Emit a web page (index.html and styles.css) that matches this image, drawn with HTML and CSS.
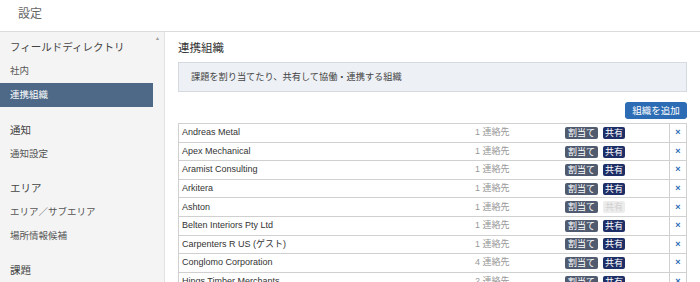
FILE: index.html
```html
<!DOCTYPE html>
<html lang="ja">
<head>
    <meta charset="UTF-8">
    <meta name="viewport" content="width=device-width, initial-scale=1.0">
    <title>設定</title>
    <link rel="stylesheet" href="styles.css">
</head>
<body>
    <div class="header">設定</div>
    <div class="layout">
        <div class="sidebar">
            <div class="scroll-up">&#9650;</div>
            <div class="group-title first">フィールドディレクトリ</div>
            <div class="nav-item">社内</div>
            <div class="nav-item active">連携組織</div>

            <div class="group-title">通知</div>
            <div class="nav-item">通知設定</div>

            <div class="group-title">エリア</div>
            <div class="nav-item">エリア／サブエリア</div>
            <div class="nav-item">場所情報候補</div>

            <div class="group-title">課題</div>
        </div>
        <div class="main">
            <h2 class="title">連携組織</h2>
            <div class="info">課題を割り当てたり、共有して協働・連携する組織</div>
            <div class="actions">
                <button type="button" class="btn-add">組織を追加</button>
            </div>
            <table class="org-table">
                <tr>
                    <td class="name">Andreas Metal</td>
                    <td class="contacts">1 連絡先</td>
                    <td class="badges"><span class="badge assign">割当て</span><span class="badge share">共有</span></td>
                    <td class="remove">×</td>
                </tr>
                <tr>
                    <td class="name">Apex Mechanical</td>
                    <td class="contacts">1 連絡先</td>
                    <td class="badges"><span class="badge assign">割当て</span><span class="badge share">共有</span></td>
                    <td class="remove">×</td>
                </tr>
                <tr>
                    <td class="name">Aramist Consulting</td>
                    <td class="contacts">1 連絡先</td>
                    <td class="badges"><span class="badge assign">割当て</span><span class="badge share">共有</span></td>
                    <td class="remove">×</td>
                </tr>
                <tr>
                    <td class="name">Arkitera</td>
                    <td class="contacts">1 連絡先</td>
                    <td class="badges"><span class="badge assign">割当て</span><span class="badge share">共有</span></td>
                    <td class="remove">×</td>
                </tr>
                <tr>
                    <td class="name">Ashton</td>
                    <td class="contacts">1 連絡先</td>
                    <td class="badges"><span class="badge assign">割当て</span><span class="badge share off">共有</span></td>
                    <td class="remove">×</td>
                </tr>
                <tr>
                    <td class="name">Belten Interiors Pty Ltd</td>
                    <td class="contacts">1 連絡先</td>
                    <td class="badges"><span class="badge assign">割当て</span><span class="badge share">共有</span></td>
                    <td class="remove">×</td>
                </tr>
                <tr>
                    <td class="name">Carpenters R US (ゲスト)</td>
                    <td class="contacts">1 連絡先</td>
                    <td class="badges"><span class="badge assign">割当て</span><span class="badge share">共有</span></td>
                    <td class="remove">×</td>
                </tr>
                <tr>
                    <td class="name">Conglomo Corporation</td>
                    <td class="contacts">4 連絡先</td>
                    <td class="badges"><span class="badge assign">割当て</span><span class="badge share">共有</span></td>
                    <td class="remove">×</td>
                </tr>
                <tr>
                    <td class="name">Hings Timber Merchants</td>
                    <td class="contacts">2 連絡先</td>
                    <td class="badges"><span class="badge assign">割当て</span><span class="badge share">共有</span></td>
                    <td class="remove">×</td>
                </tr>
            </table>
        </div>
    </div>
</body>
</html>
```

FILE: styles.css
```css
html, body {
    height: 100%;
}
body {
    margin: 0;
    font-family: "Liberation Sans", "Noto Sans CJK JP", sans-serif;
    color: #333;
    overflow: hidden;
    background: #fff;
}
.header {
    height: 31px;
    line-height: 29px;
    padding-left: 18px;
    font-size: 12px;
    color: #666;
    border-bottom: 1px solid #dcdcdc;
}
.layout {
    display: flex;
    height: calc(100% - 32px);
}
.sidebar {
    position: relative;
    width: 165px;
    flex-shrink: 0;
    background: #f4f4f4;
    border-right: 1px solid #e2e2e2;
    padding-top: 3px;
    box-sizing: border-box;
}
.scroll-up {
    position: absolute;
    top: 3px;
    right: 4px;
    font-size: 5px;
    color: #999;
}
.group-title {
    height: 24px;
    line-height: 24px;
    padding-left: 10px;
    font-size: 10.5px;
    color: #444;
    margin-top: 11px;
}
.group-title.first {
    margin-top: 0;
}
.nav-item {
    height: 23.5px;
    line-height: 23.5px;
    width: 153px;
    padding-left: 10px;
    box-sizing: border-box;
    font-size: 9.5px;
    color: #555;
}
.nav-item.active {
    height: 24px;
    line-height: 24px;
    background: #4d6987;
    color: #fff;
}
.main {
    flex: 1;
    padding: 0 13px;
}
.title {
    margin: 0;
    padding-top: 4px;
    height: 26px;
    line-height: 24px;
    font-size: 11.5px;
    font-weight: normal;
    color: #333;
}
.info {
    height: 30px;
    line-height: 28px;
    padding-left: 12px;
    background: #edf0f4;
    border: 1px solid #d5dae0;
    box-sizing: border-box;
    font-size: 9.2px;
    color: #444;
}
.actions {
    display: flex;
    justify-content: flex-end;
    padding-top: 10px;
    height: 17px;
}
.btn-add {
    width: 62px;
    height: 17px;
    padding: 0;
    border: none;
    border-radius: 3px;
    background: #2c6cb4;
    color: #fff;
    font-family: "Liberation Sans", "Noto Sans CJK JP", sans-serif;
    font-size: 9.5px;
    line-height: 17px;
}
.org-table {
    width: 100%;
    margin-top: 4px;
    border-collapse: collapse;
    table-layout: fixed;
    border: 1px solid #d0d0d0;
    font-size: 9px;
}
.org-table td {
    height: 17.6px;
    padding: 0;
    border-top: 1px solid #d0d0d0;
    line-height: 17px;
    white-space: nowrap;
}
.name {
    padding-left: 3px !important;
    color: #333;
}
.contacts {
    width: 90px;
    color: #999;
}
.badges {
    width: 104px;
}
.badge {
    display: inline-block;
    height: 12px;
    line-height: 12px;
    padding: 0 3px;
    border-radius: 2px;
    color: #fff;
    font-size: 9px;
    vertical-align: middle;
    margin-right: 5px;
}
.badge.assign {
    background: #505b6f;
}
.badge.share {
    padding: 0 2px;
    background: #1e2e66;
}
.badge.share.off {
    background: #ececec;
    color: #d0d0d0;
}
.remove {
    width: 16px;
    text-align: center;
    border-left: 1px solid #d0d0d0;
    color: #2c6cb4;
    font-size: 9px;
    font-weight: bold;
}
```
